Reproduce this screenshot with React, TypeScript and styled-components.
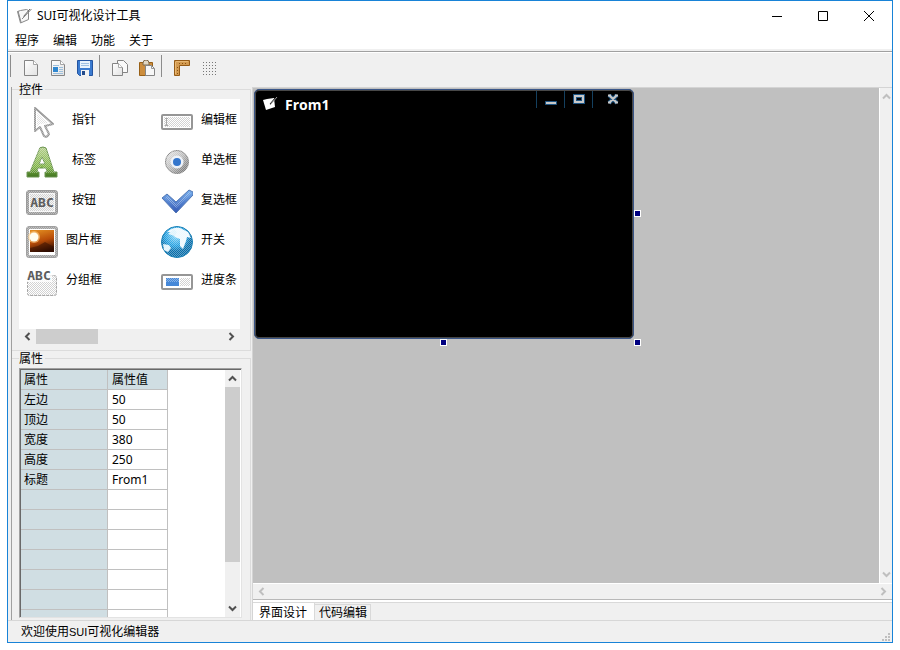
import React from 'react';
import styled, { createGlobalStyle, css } from 'styled-components';

const Global = createGlobalStyle`
  * { box-sizing: border-box; }
  body {
    margin: 0;
    background: #ffffff;
    color: #000000;
    font: 12px/16px 'Noto Sans', 'Noto Sans CJK SC', sans-serif;
  }
  button {
    margin: 0;
    padding: 0;
    border: 0;
    background: transparent;
    color: inherit;
    font: inherit;
  }
  svg { display: block; flex: none; }
`;

const Desktop = styled.div`
  height: 100vh;
  min-height: 480px;
  padding: 0 7px 7px;
`;

const AppWindow = styled.div`
  display: flex;
  flex-direction: column;
  height: 100%;
  border: 1px solid #1883d7;
  background: #f0f0f0;
`;

const TitleBar = styled.header`
  display: flex;
  align-items: center;
  height: 29px;
  padding-left: 8px;
  background: #ffffff;
`;

const AppTitle = styled.h1`
  flex: 1;
  margin: 0 0 0 5px;
  font-size: 12px;
  font-weight: 400;
`;

const CaptionButton = styled.button`
  display: grid;
  place-items: center;
  width: 46px;
  height: 29px;
`;

const MenuBar = styled.nav`
  display: flex;
  height: 21px;
  background: #ffffff;
  border-bottom: 2px solid #f0f0f0;
`;

const MenuButton = styled.button`
  padding: 0 7px;
  line-height: 22px;
`;

const Toolbar = styled.div`
  display: flex;
  align-items: flex-start;
  height: 36px;
  border-top: 1px solid #a0a0a0;
  box-shadow: inset 0 1px #ffffff;
`;

const ToolButton = styled.button`
  display: grid;
  place-items: center;
  width: 27px;
  height: 32px;
`;

const ToolDivider = styled.span<{ $first?: boolean }>`
  width: 1px;
  height: 22px;
  margin: 3px 6px 0 ${p => (p.$first ? 2 : 1)}px;
  background: #8c8c8c;
`;

const Workspace = styled.main`
  display: flex;
  flex: 1;
  min-height: 0;
`;

const SidePanel = styled.aside`
  display: flex;
  flex-direction: column;
  gap: 7px;
  flex: none;
  width: 241px;
  margin-left: 3px;
  padding: 2px 1px 0 0;
  border-left: 1px solid #a0a0a0;
`;

const Group = styled.section<{ $fill?: boolean }>`
  display: flex;
  flex-direction: column;
  border: 1px solid #dcdcdc;
  border-left: 0;
  padding: 0 10px 6px 7px;
  ${p => p.$fill && css`
    flex: 1;
    min-height: 0;
    padding: 0 8px 2px 7px;
    border-bottom: 0;
  `}
`;

const GroupTitle = styled.h2`
  width: fit-content;
  margin: -8px 0 1px;
  padding: 0 2px 0 0;
  background: #f0f0f0;
  font-size: 12px;
  font-weight: 400;
  line-height: 16px;
`;

const Palette = styled.div`
  display: grid;
  grid-template-columns: 135px 1fr;
  grid-auto-rows: 40px;
  height: 230px;
  padding: 3px 0 0 7px;
  background: #ffffff;
`;

const PaletteItem = styled.button<{ $start?: boolean }>`
  display: flex;
  align-items: center;
  text-align: ${p => (p.$start ? 'left' : 'center')};
  span {
    width: ${p => (p.$start ? 39 : 50)}px;
    margin-left: ${p => (p.$start ? 8 : 1)}px;
    padding-bottom: 5px;
    white-space: nowrap;
  }
`;

const ScrollTrack = styled.div<{ $vertical?: boolean; $size: number }>`
  display: flex;
  flex: none;
  justify-content: space-between;
  flex-direction: ${p => (p.$vertical ? 'column' : 'row')};
  ${p => (p.$vertical ? 'width' : 'height')}: ${p => p.$size}px;
  background: #f0f0f0;
`;

const ScrollArrow = styled.button<{ $off?: boolean }>`
  display: grid;
  place-items: center;
  flex: none;
  width: 17px;
  height: 17px;
  max-width: 100%;
  max-height: 100%;
  color: ${p => (p.$off ? '#bfbfbf' : '#505050')};
`;

const ThumbLane = styled.div<{ $vertical?: boolean }>`
  display: flex;
  flex: 1;
  flex-direction: ${p => (p.$vertical ? 'column' : 'row')};
`;

const Thumb = styled.div<{ $share: number }>`
  flex: 0 0 ${p => p.$share}%;
  background: #cdcdcd;
`;

const Sunken = styled.div`
  display: flex;
  flex: 1;
  min-height: 0;
  padding: 1px 1px 0 1px;
  border: 1px solid #a0a0a0;
  border-right-color: #e3e3e3;
  border-bottom-color: #e3e3e3;
  background: #ffffff;
  box-shadow: inset 1px 1px #696969;
`;

const TableView = styled.div`
  flex: 1;
  overflow: hidden;
`;

const PropertyTable = styled.table`
  width: 147px;
  table-layout: fixed;
  border-collapse: separate;
  border-spacing: 0;
  th, td {
    height: 20px;
    padding: 1px 0 0 3px;
    border: solid #c0c0c0;
    border-width: 0 1px 1px 0;
    font-weight: 400;
    line-height: 18px;
    text-align: left;
  }
  th { background: #d0dee3; }
  td { padding-left: 4px; }
  thead th:last-child { padding-left: 4px; }
`;

const KeyColumn = styled.col`
  width: 87px;
`;

const Editor = styled.section`
  display: flex;
  flex-direction: column;
  flex: 1;
  min-width: 0;
  border: solid #d4d4d4;
  border-width: 1px 0 0 1px;
`;

const CanvasRow = styled.div`
  display: flex;
  flex: 1;
  min-height: 0;
  border-bottom: 1px solid #ffffff;
`;

const Canvas = styled.div`
  position: relative;
  flex: 1;
  overflow: hidden;
  border-right: 1px solid #ffffff;
  background: #c0c0c0;
`;

const DesignForm = styled.div`
  position: absolute;
  left: 1px;
  top: 1px;
  width: 380px;
  height: 250px;
  padding: 1px;
  border: 1px solid #3a5688;
  border-radius: 5px;
  background: #000000;
  box-shadow: inset 0 0 0 1px #484848;
`;

const FormCaption = styled.div`
  display: flex;
  align-items: flex-start;
  padding-left: 6px;
  color: #ffffff;
`;

const FormTitle = styled.h3`
  flex: 1;
  margin: 4px 0 0 7px;
  font: bold 14px/20px 'Open Sans', 'Noto Sans', sans-serif;
`;

const FormIcon = styled.svg`
  margin-top: 5px;
`;

const FormButton = styled.button<{ $wide?: boolean }>`
  display: grid;
  place-items: center;
  width: ${p => (p.$wide ? 40 : 28)}px;
  height: 17px;
  border-left: 1px solid #14405f;
`;

const Handle = styled.span<{ $x: number; $y: number }>`
  position: absolute;
  left: ${p => p.$x}px;
  top: ${p => p.$y}px;
  width: 7px;
  height: 7px;
  border: 1px solid #ffffff;
  background: #000080;
`;

const TabStrip = styled.div`
  display: flex;
  align-items: flex-end;
  height: 21px;
  border-top: 1px solid #b8b8b8;
  background: linear-gradient(#ffffff 2px, #d9d9d9 2px, #d9d9d9 3px, #f0f0f0 3px);
`;

const Tab = styled.button<{ $active?: boolean }>`
  height: 16px;
  padding: 0 3px 0 4px;
  border: solid #d9d9d9;
  border-width: 1px 1px 0 0;
  line-height: 13px;
  ${p => p.$active && css`
    height: 17px;
    padding: 0 7px 0 6px;
    border-top: 0;
    background: #ffffff;
    line-height: 19px;
  `}
`;

const StatusBar = styled.footer`
  display: flex;
  justify-content: space-between;
  align-items: flex-end;
  height: 22px;
  padding: 0 2px 1px 13px;
  border-top: 1px solid #d7d7d7;
  line-height: 18px;
`;

const Latin = styled.span`
  font: 11px/18px 'Liberation Sans', sans-serif;
`;

type Dir = 'up' | 'down' | 'left' | 'right';
const chevrons: Record<Dir, string> = {
  up: 'M1 6.5 4.5 3 8 6.5',
  down: 'M1 2.5 4.5 6 8 2.5',
  left: 'M6.5 1 3 4.5 6.5 8',
  right: 'M2.5 1 6 4.5 2.5 8',
};

function Arrow({ dir, off }: { dir: Dir; off?: boolean }) {
  return (
    <ScrollArrow $off={off} disabled={off} aria-label={`scroll ${dir}`}>
      <svg width="9" height="9" fill="none" stroke="currentColor" strokeWidth="2">
        <path d={chevrons[dir]} />
      </svg>
    </ScrollArrow>
  );
}

const Defs = () => (
  <svg width="0" height="0" aria-hidden="true">
    <defs>
      <pattern id="dots" width="2" height="2" patternUnits="userSpaceOnUse">
        <path d="M0 0h1v1H0zM1 1h1v1H1z" fill="#d2d2d2" />
      </pattern>
      <pattern id="mesh" width="2" height="2" patternUnits="userSpaceOnUse">
        <path d="M0 0h1v1H0zM1 1h1v1H1z" fill="#ffffff" fillOpacity=".35" />
      </pattern>
      <linearGradient id="green" x2="0" y2="1">
        <stop stopColor="#b5cf8d" /><stop offset=".65" stopColor="#7eb343" /><stop offset="1" stopColor="#417421" />
      </linearGradient>
      <linearGradient id="sunset" x1=".3" x2=".6" y2="1">
        <stop stopColor="#e08a20" /><stop offset=".5" stopColor="#b84c08" /><stop offset="1" stopColor="#2a0a00" />
      </linearGradient>
      <linearGradient id="tick" x2="0" y2="1">
        <stop stopColor="#78b0ee" /><stop offset="1" stopColor="#3358b4" />
      </linearGradient>
      <radialGradient id="sea" cx=".45" cy=".3">
        <stop stopColor="#8ad6f8" /><stop offset=".65" stopColor="#219fe0" /><stop offset="1" stopColor="#086da9" />
      </radialGradient>
      <linearGradient id="steel" x2="1" y2="1">
        <stop stopColor="#ededed" /><stop offset=".5" stopColor="#b8b8b8" /><stop offset="1" stopColor="#606060" />
      </linearGradient>
      <linearGradient id="paper" x2="1" y2="1">
        <stop stopColor="#ffffff" /><stop offset="1" stopColor="#e2e2e2" />
      </linearGradient>
    </defs>
  </svg>
);

const Letters = ({ x, y }: { x: number; y: number }) => (
  <text x={x} y={y} textAnchor="middle" fontFamily="DejaVu Sans Mono, monospace" fontSize="13" fontWeight="bold" fill="#5c5c5c">ABC</text>
);

const art = {
  pointer: (
    <>
      <path d="M9 2v23l5-4 4 9q3 2 5-2l-4-8 8-2z" fill="#fff" stroke="#969696" strokeWidth="2" strokeLinejoin="round" />
      <path d="M11 7v13l3-2 8-1z" fill="url(#dots)" />
      <path d="M8 1v25l6-3 4 8h6v-4l-3-6 7-2z" fill="url(#mesh)" />
    </>
  ),
  label: (
    <>
      <path fillRule="evenodd" d="M13 4q0-3 4-3t4 4l7 21h3v5H19v-5h2l-1-4h-8l-1 4h2v5H1v-5h3zM13 18h6l-3-7z" fill="url(#green)" stroke="#6d9552" />
      <path d="M13 2h7l9 25H19l-3-8-5 8H3z" fill="url(#mesh)" />
    </>
  ),
  button: (
    <>
      <rect x="1.5" y="5.5" width="29" height="22" rx="2" fill="#f6f6f6" stroke="#9a9a9a" strokeWidth="3" />
      <rect x="1" y="5" width="30" height="23" fill="url(#mesh)" />
      <rect x="4" y="8" width="24" height="17" fill="url(#dots)" />
      <Letters x={16} y={21} />
    </>
  ),
  picture: (
    <>
      <rect x="1.5" y="1.5" width="29" height="29" rx="2" fill="#fff" stroke="#a0a0a0" strokeWidth="3" />
      <rect x="1" y="1" width="30" height="30" fill="url(#mesh)" />
      <rect x="4" y="4" width="24" height="22" fill="url(#sunset)" />
      <path d="M4 26v-4l8-2 7-4 9 5v5z" fill="#310d02" fillOpacity=".5" />
      <circle cx="8" cy="11" r="6" fill="#ffd18a" fillOpacity=".6" />
      <circle cx="8" cy="11" r="4.5" fill="#fffdf0" />
    </>
  ),
  group: (
    <>
      <rect x="1.5" y="9.500" width="29" height="20" rx="2" fill="url(#dots)" stroke="#a8a8a8" strokeDasharray="3 1" />
      <path d="M1 4h25v12H1z" fill="#fff" fillOpacity=".8" />
      <Letters x={13} y={14} />
    </>
  ),
  input: (
    <>
      <rect x="1" y="9" width="30" height="14" rx="1" fill="#fff" stroke="#969696" strokeWidth="2" />
      <rect x="3" y="11" width="26" height="10" fill="url(#dots)" />
      <path d="M5.5 12v8M4 12.5h3M4 19.5h3" stroke="#aaa" />
    </>
  ),
  radio: (
    <>
      <circle cx="16" cy="16" r="11.5" fill="url(#steel)" stroke="#858585" />
      <circle cx="16" cy="16" r="12" fill="url(#mesh)" />
      <circle cx="16" cy="16" r="6.5" fill="#eef2f8" />
      <circle cx="16" cy="16" r="4" fill="#3476cc" />
    </>
  ),
  check: (
    <>
      <path d="M1 12l5-4 9 8L28 4l4 2v3L15 27z" fill="url(#tick)" stroke="#5278b5" strokeLinejoin="round" />
      <path d="M4 12l3-2 8 8L28 6l2 1-15 15z" fill="url(#mesh)" />
    </>
  ),
  globe: (
    <>
      <circle cx="16" cy="16" r="15.5" fill="url(#sea)" stroke="#1b80b5" />
      <path d="M6 6q6-5 13-4l8 4 3 6-4-1-1 4-3 8-3-3v-7l-5-2-4-5z" fill="#edf8fe" />
      <path d="M2 18l6 1 2 3-3 4-4-2zM13 3l3 3-2 4-7-2z" fill="#dff3fc" />
      <circle cx="16" cy="16" r="15" fill="url(#mesh)" />
    </>
  ),
  progress: (
    <>
      <rect x="1" y="9" width="30" height="14" rx="1" fill="#fff" stroke="#969696" strokeWidth="2" />
      <rect x="19" y="12" width="10" height="8" fill="url(#dots)" />
      <rect x="5" y="12" width="13" height="8" fill="#4688d8" />
      <rect x="5" y="12" width="13" height="4" fill="url(#mesh)" />
    </>
  ),
};

const paletteItems: [keyof typeof art, string][] = [
  ['pointer', '指针'], ['input', '编辑框'],
  ['label', '标签'], ['radio', '单选框'],
  ['button', '按钮'], ['check', '复选框'],
  ['picture', '图片框'], ['globe', '开关'],
  ['group', '分组框'], ['progress', '进度条'],
];

const sheet = 'M1.5.5h9l4 4v11h-13z';
const tools: Record<string, React.ReactNode> = {
  新建: <><path d={sheet} fill="url(#paper)" stroke="#858585" /><path d="M10.500.5v4h4" fill="#fff" stroke="#a5a5a5" /></>,
  打开: (
    <>
      <path d={sheet} fill="url(#paper)" stroke="#858585" /><path d="M10.500.5v4h4" fill="#fff" stroke="#a5a5a5" />
      <path d="M3 5.500h6M9 7.500h4M9 9.500h4M3 13.500h10M9 11.500h4" stroke="#9dbfdb" />
      <path d="M3 7h5v5H3z" fill="#2f87cf" />
    </>
  ),
  保存: (
    <>
      <path d="M.5.5h15v15h-13l-2-2z" fill="#3b7bd0" stroke="#2454a0" />
      <path d="M3 1h10v7H3z" fill="#e8f2fc" /><path d="M4 3.500h8M4 5.500h8" stroke="#9ebfe2" />
      <path d="M4 10h8v6H4z" fill="#f2f2f2" /><path d="M5 11h3v4H5z" fill="#234b8c" />
    </>
  ),
  复制: (
    <>
      <path d="M5.500.5h6l4 4v8h-10z" fill="#fafafa" stroke="#858585" />
      <path d="M.5 3.500h6l4 4v8H.5z" fill="url(#paper)" stroke="#858585" /><path d="M6.500 3.500v4h4" fill="#fff" stroke="#aaa" />
    </>
  ),
  粘贴: (
    <>
      <path d="M.5 2.500h13v13H.5z" fill="#cc8d3d" stroke="#986016" />
      <path d="M4 3q0-3 3-3t3 3v2H4z" fill="#e0d7c4" stroke="#806a48" />
      <path d="M6.500 5.500h6l3 3v7h-9z" fill="#f7f7f7" stroke="#858585" /><path d="M12.500 5.500v3h3" fill="none" stroke="#999" />
    </>
  ),
  标尺: (
    <>
      <path d="M.5.5h15v5h-10v10h-5z" fill="#d39a50" stroke="#955b17" />
      <path d="M5.500 3v1M8.500 3v1M11.500 3v1M3 7.500h1M3 10.500h1M3 13.500h1" stroke="#8a5515" />
      <path d="M2 1.500h12M1.500 2v12" stroke="#e8b873" />
    </>
  ),
  网格: <path d="M2 2.500h14M2 5.500h14M2 8.500h14M2 11.500h14M2 14.500h14" stroke="#777" strokeDasharray="1 2" />,
};

const ToolIcon = ({ name }: { name: string }) => (
  <ToolButton aria-label={name}>
    <svg width="16" height="16">{tools[name]}</svg>
  </ToolButton>
);

const properties: [string, string][] = [
  ['左边', '50'], ['顶边', '50'], ['宽度', '380'], ['高度', '250'], ['标题', 'From1'],
  ...Array.from({ length: 9 }, (): [string, string] => ['', '']),
];

export default function App() {
  return (
    <Desktop>
      <Global />
      <AppWindow>
        <TitleBar>
          <svg width="16" height="16" fill="none" stroke="#888">
            <path d="M1.500 3.500l3-1 6-1 2 1v9l-8 3.500z" fill="#f7f7f7" />
            <path d="M2 3l3 11M15.500 1L8 9l-2 2" /><path d="M14 1L7.500 8.500" stroke="#666" />
          </svg>
          <AppTitle>SUI可视化设计工具</AppTitle>
          <CaptionButton aria-label="最小化"><svg width="10" height="10"><path d="M0 5.500h10" stroke="#000" /></svg></CaptionButton>
          <CaptionButton aria-label="最大化"><svg width="10" height="10"><path d="M.5.5h9v9h-9z" fill="none" stroke="#000" /></svg></CaptionButton>
          <CaptionButton aria-label="关闭"><svg width="10" height="10"><path d="M0 0l10 10M10 0L0 10" stroke="#000" /></svg></CaptionButton>
        </TitleBar>
        <MenuBar>
          {['程序', '编辑', '功能', '关于'].map(m => <MenuButton key={m}>{m}</MenuButton>)}
        </MenuBar>
        <Toolbar>
          <ToolDivider $first />
          <ToolIcon name="新建" /><ToolIcon name="打开" /><ToolIcon name="保存" />
          <ToolDivider />
          <ToolIcon name="复制" /><ToolIcon name="粘贴" />
          <ToolDivider />
          <ToolIcon name="标尺" /><ToolIcon name="网格" />
        </Toolbar>
        <Defs />
        <Workspace>
          <SidePanel>
            <Group>
              <GroupTitle>控件</GroupTitle>
              <Palette>
                {paletteItems.map(([icon, name], i) => (
                  <PaletteItem key={name} $start={i % 2 === 1}>
                    <svg width="32" height="32">{art[icon]}</svg>
                    <span>{name}</span>
                  </PaletteItem>
                ))}
              </Palette>
              <ScrollTrack $size={15}>
                <Arrow dir="left" />
                <ThumbLane><Thumb $share={33} /></ThumbLane>
                <Arrow dir="right" />
              </ScrollTrack>
            </Group>
            <Group $fill>
              <GroupTitle>属性</GroupTitle>
              <Sunken>
                <TableView>
                  <PropertyTable>
                    <colgroup><KeyColumn /><col /></colgroup>
                    <thead><tr><th scope="col">属性</th><th scope="col">属性值</th></tr></thead>
                    <tbody>
                      {properties.map(([key, value], i) => (
                        <tr key={i}><th scope="row">{key}</th><td>{value}</td></tr>
                      ))}
                    </tbody>
                  </PropertyTable>
                </TableView>
                <ScrollTrack $vertical $size={15}>
                  <Arrow dir="up" />
                  <ThumbLane $vertical><Thumb $share={82} /></ThumbLane>
                  <Arrow dir="down" />
                </ScrollTrack>
              </Sunken>
            </Group>
          </SidePanel>
          <Editor>
            <CanvasRow>
              <Canvas>
                <DesignForm>
                  <FormCaption>
                    <FormIcon width="16" height="16">
                      <path d="M1 4l4-1 7-1 1 9-9 3z" fill="#fff" />
                      <path d="M15 1L8 9" stroke="#999" /><path d="M13 2L8 8" stroke="#222" />
                    </FormIcon>
                    <FormTitle>From1</FormTitle>
                    <FormButton aria-label="最小化">
                      <svg width="12" height="10"><path d="M.5 6.500h11v3H.5z" fill="#c8c8c8" stroke="#1d5482" /></svg>
                    </FormButton>
                    <FormButton aria-label="最大化">
                      <svg width="12" height="11" fill="none"><path d="M2 2h8v6H2z" stroke="#1d5482" strokeWidth="4" /><path d="M2 2h8v6H2z" stroke="#c8c8c8" strokeWidth="2" /></svg>
                    </FormButton>
                    <FormButton $wide aria-label="关闭">
                      <svg width="12" height="11" fill="none">
                        <path d="M2 1l8 8M10 1L2 9" stroke="#1d5482" strokeWidth="4" />
                        <path d="M2 1l8 8M10 1L2 9M1 1.500h3M8 1.500h3M1 8.500h3M8 8.500h3" stroke="#c8c8c8" strokeWidth="2" />
                      </svg>
                    </FormButton>
                  </FormCaption>
                </DesignForm>
                <Handle $x={381} $y={122} />
                <Handle $x={187} $y={251} />
                <Handle $x={381} $y={251} />
              </Canvas>
              <ScrollTrack $vertical $size={12}>
                <Arrow dir="up" off />
                <Arrow dir="down" off />
              </ScrollTrack>
            </CanvasRow>
            <ScrollTrack $size={15}>
              <Arrow dir="left" off />
              <Arrow dir="right" off />
            </ScrollTrack>
            <TabStrip role="tablist">
              <Tab $active role="tab" aria-selected="true">界面设计</Tab>
              <Tab role="tab" aria-selected="false">代码编辑</Tab>
            </TabStrip>
          </Editor>
        </Workspace>
        <StatusBar>
          <span>欢迎使用<Latin>SUI</Latin>可视化编辑器</span>
          <svg width="8" height="8" fill="#bfbfbf">
            <path d="M6 0h2v2H6zM3 3h2v2H3zM6 3h2v2H6zM0 6h2v2H0zM3 6h2v2H3zM6 6h2v2H6z" />
          </svg>
        </StatusBar>
      </AppWindow>
    </Desktop>
  );
}
